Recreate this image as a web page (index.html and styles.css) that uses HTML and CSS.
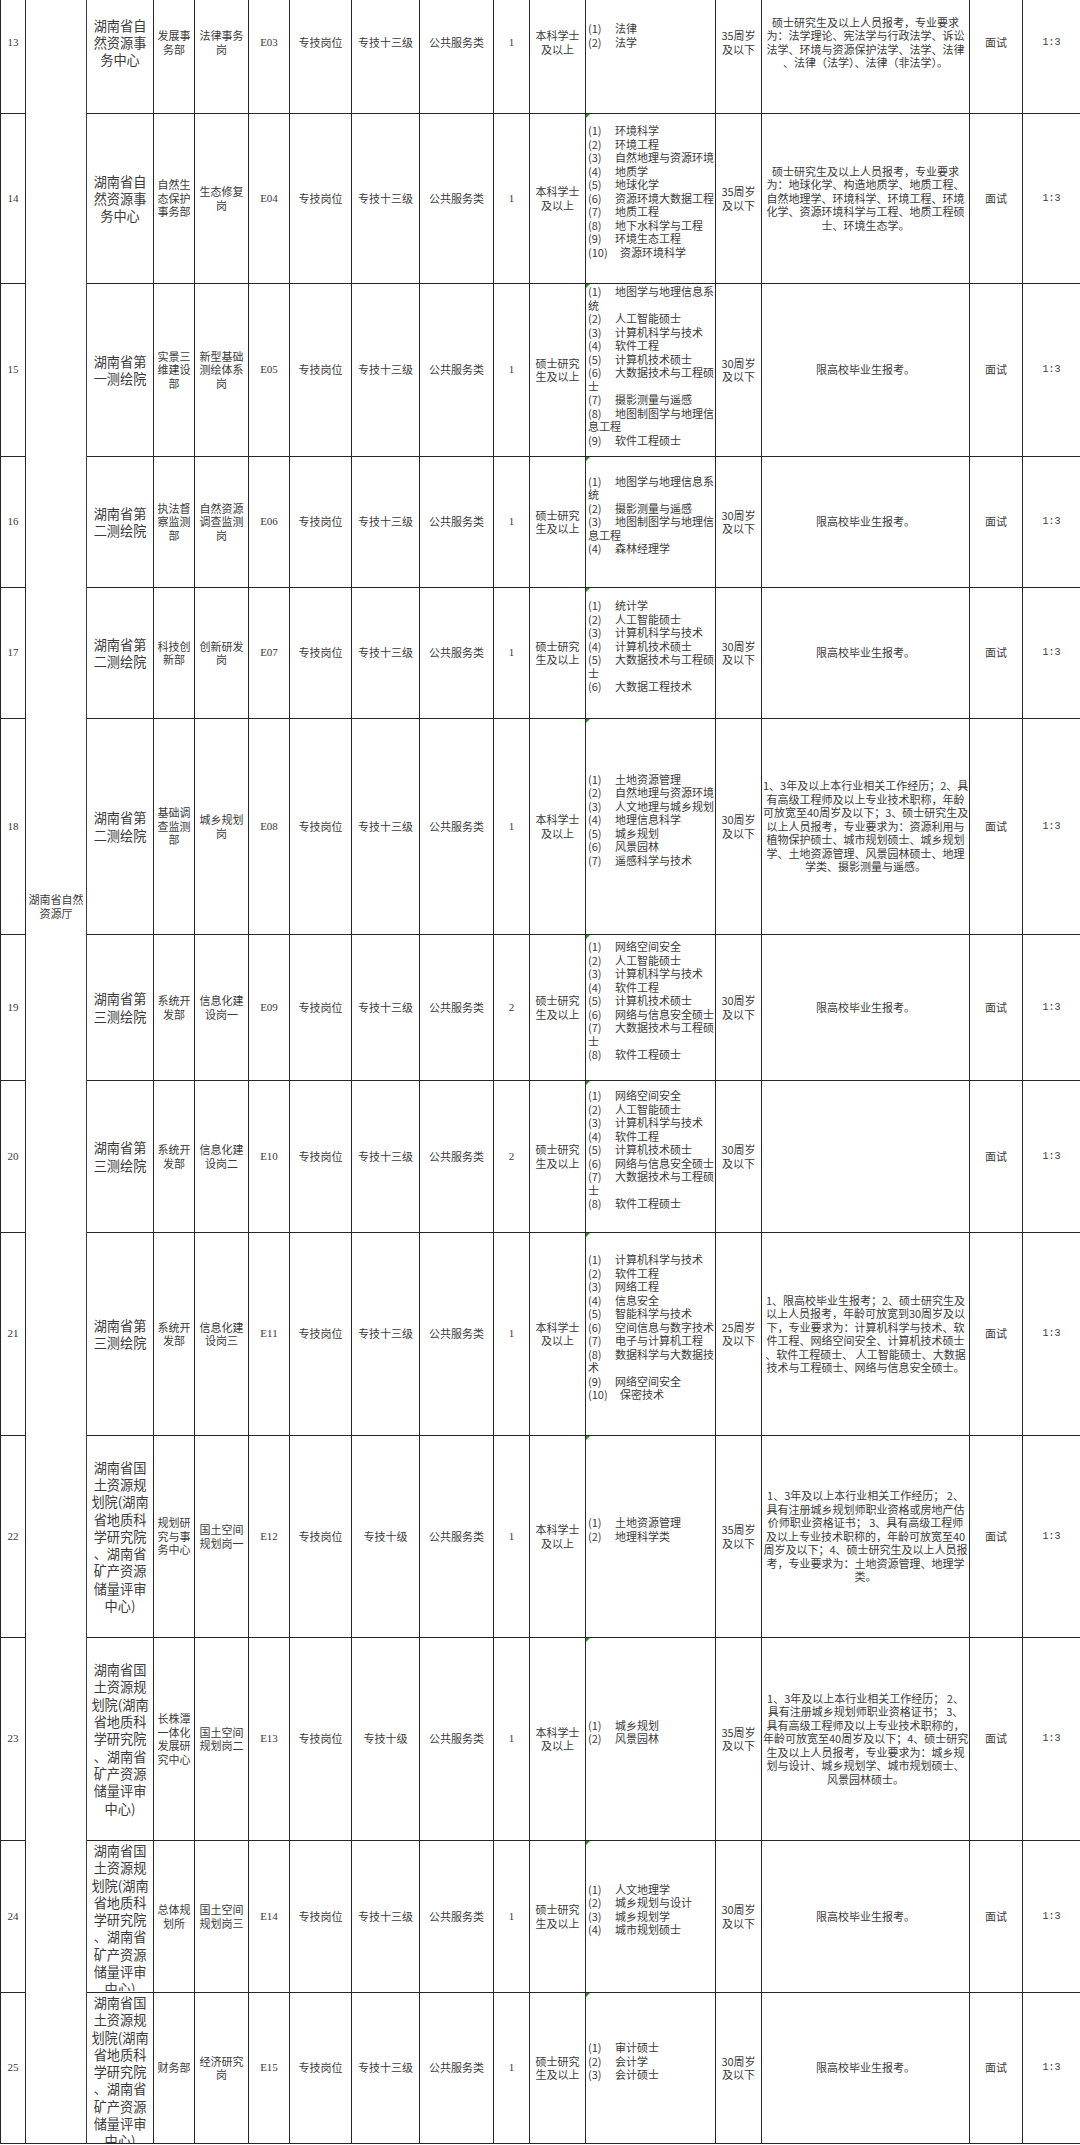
FILE: index.html
```html
<!DOCTYPE html>
<html lang="zh-CN">
<head>
<meta charset="utf-8">
<title>岗位表</title>
<link rel="stylesheet" href="styles.css">
</head>
<body>
<table class="sheet">
<colgroup>
<col class="w-no"><col class="w-org"><col class="w-unit"><col class="w-dept"><col class="w-pos"><col class="w-code"><col class="w-type"><col class="w-level"><col class="w-cat"><col class="w-cnt"><col class="w-edu"><col class="w-maj"><col class="w-age"><col class="w-other"><col class="w-exam"><col class="w-ratio">
</colgroup>
<tbody>
<tr class="r13">
<td class="no">13</td>
<td class="org" rowspan="13">湖南省自然<br>资源厅</td>
<td class="unit">湖南省自<br>然资源事<br>务中心</td>
<td>发展事<br>务部</td>
<td>法律事务<br>岗</td>
<td class="num">E03</td>
<td>专技岗位</td>
<td>专技十三级</td>
<td>公共服务类</td>
<td class="num">1</td>
<td>本科学士<br>及以上</td>
<td class="maj"><span class="n">(1)</span>法律<br><span class="n">(2)</span>法学</td>
<td>35周岁<br>及以下</td>
<td>硕士研究生及以上人员报考，专业要求<br>为：法学理论、宪法学与行政法学、诉讼<br>法学、环境与资源保护法学、法学、法律<br>、法律（法学）、法律（非法学）。</td>
<td>面试</td>
<td class="ratio">1:3</td>
</tr>
<tr class="r14">
<td class="no">14</td>
<td class="unit">湖南省自<br>然资源事<br>务中心</td>
<td>自然生<br>态保护<br>事务部</td>
<td>生态修复<br>岗</td>
<td class="num">E04</td>
<td>专技岗位</td>
<td>专技十三级</td>
<td>公共服务类</td>
<td class="num">1</td>
<td>本科学士<br>及以上</td>
<td class="maj"><span class="n">(1)</span>环境科学<br><span class="n">(2)</span>环境工程<br><span class="n">(3)</span>自然地理与资源环境<br><span class="n">(4)</span>地质学<br><span class="n">(5)</span>地球化学<br><span class="n">(6)</span>资源环境大数据工程<br><span class="n">(7)</span>地质工程<br><span class="n">(8)</span>地下水科学与工程<br><span class="n">(9)</span>环境生态工程<br><span class="n n2">(10)</span>资源环境科学</td>
<td>35周岁<br>及以下</td>
<td>硕士研究生及以上人员报考，专业要求<br>为：地球化学、构造地质学、地质工程、<br>自然地理学、环境科学、环境工程、环境<br>化学、资源环境科学与工程、地质工程硕<br>士、环境生态学。</td>
<td>面试</td>
<td class="ratio">1:3</td>
</tr>
<tr class="r15">
<td class="no">15</td>
<td class="unit">湖南省第<br>一测绘院</td>
<td>实景三<br>维建设<br>部</td>
<td>新型基础<br>测绘体系<br>岗</td>
<td class="num">E05</td>
<td>专技岗位</td>
<td>专技十三级</td>
<td>公共服务类</td>
<td class="num">1</td>
<td>硕士研究<br>生及以上</td>
<td class="maj top"><span class="n">(1)</span>地图学与地理信息系<br>统<br><span class="n">(2)</span>人工智能硕士<br><span class="n">(3)</span>计算机科学与技术<br><span class="n">(4)</span>软件工程<br><span class="n">(5)</span>计算机技术硕士<br><span class="n">(6)</span>大数据技术与工程硕<br>士<br><span class="n">(7)</span>摄影测量与遥感<br><span class="n">(8)</span>地图制图学与地理信<br>息工程<br><span class="n">(9)</span>软件工程硕士</td>
<td>30周岁<br>及以下</td>
<td>限高校毕业生报考。</td>
<td>面试</td>
<td class="ratio">1:3</td>
</tr>
<tr class="r16">
<td class="no">16</td>
<td class="unit">湖南省第<br>二测绘院</td>
<td>执法督<br>察监测<br>部</td>
<td>自然资源<br>调查监测<br>岗</td>
<td class="num">E06</td>
<td>专技岗位</td>
<td>专技十三级</td>
<td>公共服务类</td>
<td class="num">1</td>
<td>硕士研究<br>生及以上</td>
<td class="maj"><span class="n">(1)</span>地图学与地理信息系<br>统<br><span class="n">(2)</span>摄影测量与遥感<br><span class="n">(3)</span>地图制图学与地理信<br>息工程<br><span class="n">(4)</span>森林经理学</td>
<td>30周岁<br>及以下</td>
<td>限高校毕业生报考。</td>
<td>面试</td>
<td class="ratio">1:3</td>
</tr>
<tr class="r17">
<td class="no">17</td>
<td class="unit">湖南省第<br>二测绘院</td>
<td>科技创<br>新部</td>
<td>创新研发<br>岗</td>
<td class="num">E07</td>
<td>专技岗位</td>
<td>专技十三级</td>
<td>公共服务类</td>
<td class="num">1</td>
<td>硕士研究<br>生及以上</td>
<td class="maj"><span class="n">(1)</span>统计学<br><span class="n">(2)</span>人工智能硕士<br><span class="n">(3)</span>计算机科学与技术<br><span class="n">(4)</span>计算机技术硕士<br><span class="n">(5)</span>大数据技术与工程硕<br>士<br><span class="n">(6)</span>大数据工程技术</td>
<td>30周岁<br>及以下</td>
<td>限高校毕业生报考。</td>
<td>面试</td>
<td class="ratio">1:3</td>
</tr>
<tr class="r18">
<td class="no">18</td>
<td class="unit">湖南省第<br>二测绘院</td>
<td>基础调<br>查监测<br>部</td>
<td>城乡规划<br>岗</td>
<td class="num">E08</td>
<td>专技岗位</td>
<td>专技十三级</td>
<td>公共服务类</td>
<td class="num">1</td>
<td>本科学士<br>及以上</td>
<td class="maj"><span class="n">(1)</span>土地资源管理<br><span class="n">(2)</span>自然地理与资源环境<br><span class="n">(3)</span>人文地理与城乡规划<br><span class="n">(4)</span>地理信息科学<br><span class="n">(5)</span>城乡规划<br><span class="n">(6)</span>风景园林<br><span class="n">(7)</span>遥感科学与技术</td>
<td>30周岁<br>及以下</td>
<td>1、3年及以上本行业相关工作经历；2、具<br>有高级工程师及以上专业技术职称，年龄<br>可放宽至40周岁及以下；3、硕士研究生及<br>以上人员报考，专业要求为：资源利用与<br>植物保护硕士、城市规划硕士、城乡规划<br>学、土地资源管理、风景园林硕士、地理<br>学类、摄影测量与遥感。</td>
<td>面试</td>
<td class="ratio">1:3</td>
</tr>
<tr class="r19">
<td class="no">19</td>
<td class="unit">湖南省第<br>三测绘院</td>
<td>系统开<br>发部</td>
<td>信息化建<br>设岗一</td>
<td class="num">E09</td>
<td>专技岗位</td>
<td>专技十三级</td>
<td>公共服务类</td>
<td class="num">2</td>
<td>硕士研究<br>生及以上</td>
<td class="maj"><span class="n">(1)</span>网络空间安全<br><span class="n">(2)</span>人工智能硕士<br><span class="n">(3)</span>计算机科学与技术<br><span class="n">(4)</span>软件工程<br><span class="n">(5)</span>计算机技术硕士<br><span class="n">(6)</span>网络与信息安全硕士<br><span class="n">(7)</span>大数据技术与工程硕<br>士<br><span class="n">(8)</span>软件工程硕士</td>
<td>30周岁<br>及以下</td>
<td>限高校毕业生报考。</td>
<td>面试</td>
<td class="ratio">1:3</td>
</tr>
<tr class="r20">
<td class="no">20</td>
<td class="unit">湖南省第<br>三测绘院</td>
<td>系统开<br>发部</td>
<td>信息化建<br>设岗二</td>
<td class="num">E10</td>
<td>专技岗位</td>
<td>专技十三级</td>
<td>公共服务类</td>
<td class="num">2</td>
<td>硕士研究<br>生及以上</td>
<td class="maj"><span class="n">(1)</span>网络空间安全<br><span class="n">(2)</span>人工智能硕士<br><span class="n">(3)</span>计算机科学与技术<br><span class="n">(4)</span>软件工程<br><span class="n">(5)</span>计算机技术硕士<br><span class="n">(6)</span>网络与信息安全硕士<br><span class="n">(7)</span>大数据技术与工程硕<br>士<br><span class="n">(8)</span>软件工程硕士</td>
<td>30周岁<br>及以下</td>
<td></td>
<td>面试</td>
<td class="ratio">1:3</td>
</tr>
<tr class="r21">
<td class="no">21</td>
<td class="unit">湖南省第<br>三测绘院</td>
<td>系统开<br>发部</td>
<td>信息化建<br>设岗三</td>
<td class="num">E11</td>
<td>专技岗位</td>
<td>专技十三级</td>
<td>公共服务类</td>
<td class="num">1</td>
<td>本科学士<br>及以上</td>
<td class="maj"><span class="n">(1)</span>计算机科学与技术<br><span class="n">(2)</span>软件工程<br><span class="n">(3)</span>网络工程<br><span class="n">(4)</span>信息安全<br><span class="n">(5)</span>智能科学与技术<br><span class="n">(6)</span>空间信息与数字技术<br><span class="n">(7)</span>电子与计算机工程<br><span class="n">(8)</span>数据科学与大数据技<br>术<br><span class="n">(9)</span>网络空间安全<br><span class="n n2">(10)</span>保密技术</td>
<td>25周岁<br>及以下</td>
<td>1、限高校毕业生报考；2、硕士研究生及<br>以上人员报考，年龄可放宽到30周岁及以<br>下，专业要求为：计算机科学与技术、软<br>件工程、网络空间安全、计算机技术硕士<br>、软件工程硕士、 人工智能硕士、大数据<br>技术与工程硕士、网络与信息安全硕士。</td>
<td>面试</td>
<td class="ratio">1:3</td>
</tr>
<tr class="r22">
<td class="no">22</td>
<td class="unit">湖南省国<br>土资源规<br>划院(湖南<br>省地质科<br>学研究院<br>、湖南省<br>矿产资源<br>储量评审<br>中心)</td>
<td>规划研<br>究与事<br>务中心</td>
<td>国土空间<br>规划岗一</td>
<td class="num">E12</td>
<td>专技岗位</td>
<td>专技十级</td>
<td>公共服务类</td>
<td class="num">1</td>
<td>本科学士<br>及以上</td>
<td class="maj"><span class="n">(1)</span>土地资源管理<br><span class="n">(2)</span>地理科学类</td>
<td>35周岁<br>及以下</td>
<td>1、3年及以上本行业相关工作经历； 2、<br>具有注册城乡规划师职业资格或房地产估<br>价师职业资格证书； 3、具有高级工程师<br>及以上专业技术职称的，年龄可放宽至40<br>周岁及以下；4、硕士研究生及以上人员报<br>考，专业要求为：土地资源管理、地理学<br>类。</td>
<td>面试</td>
<td class="ratio">1:3</td>
</tr>
<tr class="r23">
<td class="no">23</td>
<td class="unit">湖南省国<br>土资源规<br>划院(湖南<br>省地质科<br>学研究院<br>、湖南省<br>矿产资源<br>储量评审<br>中心)</td>
<td>长株潭<br>一体化<br>发展研<br>究中心</td>
<td>国土空间<br>规划岗二</td>
<td class="num">E13</td>
<td>专技岗位</td>
<td>专技十级</td>
<td>公共服务类</td>
<td class="num">1</td>
<td>本科学士<br>及以上</td>
<td class="maj"><span class="n">(1)</span>城乡规划<br><span class="n">(2)</span>风景园林</td>
<td>35周岁<br>及以下</td>
<td>1、3年及以上本行业相关工作经历； 2、<br>具有注册城乡规划师职业资格证书； 3、<br>具有高级工程师及以上专业技术职称的，<br>年龄可放宽至40周岁及以下；4、硕士研究<br>生及以上人员报考，专业要求为：城乡规<br>划与设计、城乡规划学、城市规划硕士、<br>风景园林硕士。</td>
<td>面试</td>
<td class="ratio">1:3</td>
</tr>
<tr class="r24">
<td class="no">24</td>
<td class="unit clipcell"><div class="clip">湖南省国<br>土资源规<br>划院(湖南<br>省地质科<br>学研究院<br>、湖南省<br>矿产资源<br>储量评审<br>中心)</div></td>
<td>总体规<br>划所</td>
<td>国土空间<br>规划岗三</td>
<td class="num">E14</td>
<td>专技岗位</td>
<td>专技十三级</td>
<td>公共服务类</td>
<td class="num">1</td>
<td>硕士研究<br>生及以上</td>
<td class="maj"><span class="n">(1)</span>人文地理学<br><span class="n">(2)</span>城乡规划与设计<br><span class="n">(3)</span>城乡规划学<br><span class="n">(4)</span>城市规划硕士</td>
<td>30周岁<br>及以下</td>
<td>限高校毕业生报考。</td>
<td>面试</td>
<td class="ratio">1:3</td>
</tr>
<tr class="r25">
<td class="no">25</td>
<td class="unit clipcell"><div class="clip">湖南省国<br>土资源规<br>划院(湖南<br>省地质科<br>学研究院<br>、湖南省<br>矿产资源<br>储量评审<br>中心)</div></td>
<td>财务部</td>
<td>经济研究<br>岗</td>
<td class="num">E15</td>
<td>专技岗位</td>
<td>专技十三级</td>
<td>公共服务类</td>
<td class="num">1</td>
<td>硕士研究<br>生及以上</td>
<td class="maj"><span class="n">(1)</span>审计硕士<br><span class="n">(2)</span>会计学<br><span class="n">(3)</span>会计硕士</td>
<td>30周岁<br>及以下</td>
<td>限高校毕业生报考。</td>
<td>面试</td>
<td class="ratio">1:3</td>
</tr>
</tbody>
</table>
</body>
</html>
```

FILE: styles.css
```css
* { box-sizing: border-box; }

html, body {
  margin: 0;
  padding: 0;
  background: #ffffff;
}

body {
  width: 1080px;
  height: 2145px;
  overflow: hidden;
}

.sheet {
  border-collapse: separate;
  border-spacing: 0;
  table-layout: fixed;
  width: 1080px;
  margin-top: -28px;
  font-family: "Noto Sans CJK SC", "Noto Sans", sans-serif;
  font-size: 11px;
  line-height: 13.5px;
  color: #3a3a3a;
}

.w-no { width: 26px; }
.w-org { width: 61px; }
.w-unit { width: 67px; }
.w-dept { width: 41px; }
.w-pos { width: 54px; }
.w-code { width: 41px; }
.w-type { width: 62px; }
.w-level { width: 68px; }
.w-cat { width: 74px; }
.w-cnt { width: 36px; }
.w-edu { width: 56px; }
.w-maj { width: 130px; }
.w-age { width: 46px; }
.w-other { width: 208px; }
.w-exam { width: 53px; }
.w-ratio { width: 57px; }

.sheet td {
  border-right: 1px solid #262626;
  border-bottom: 1px solid #262626;
  padding: 0 1px;
  text-align: center;
  vertical-align: middle;
  white-space: nowrap;
  overflow: hidden;
}

.sheet td.no {
  border-left: 1px solid #262626;
  font-family: "Liberation Serif", serif;
  font-size: 11px;
}

.sheet td.org {
  vertical-align: top;
  padding-top: 921px;
  border-right-color: #3c3c3c;
}

.sheet td.unit {
  padding: 0;
  font-size: 13.2px;
  line-height: 17.3px;
}

.sheet td.clipcell {
  vertical-align: top;
  padding-top: 1px;
}

.clip {
  height: 149px;
  overflow: hidden;
}

.sheet td.num {
  font-family: "Liberation Serif", serif;
  font-size: 11px;
}

.sheet td.ratio {
  border-right: none;
  font-family: "Liberation Mono", monospace;
  font-size: 10px;
}

.sheet td.maj {
  position: relative;
  text-align: left;
  padding: 0 2px 13.5px 2px;
}

.sheet td.maj::before {
  content: "";
  position: absolute;
  left: 0;
  top: 0;
  border-top: 4px solid #2f8f2a;
  border-right: 4px solid transparent;
}

.sheet td.maj.top {
  vertical-align: top;
  padding-top: 1px;
  padding-bottom: 0;
}

.n {
  display: inline-block;
  width: 27px;
}

.n.n2 {
  width: 32px;
}

.r13 { height: 142px; }
.r14 { height: 170px; }
.r15 { height: 173px; }
.r16 { height: 131px; }
.r17 { height: 131px; }
.r18 { height: 216px; }
.r19 { height: 146px; }
.r20 { height: 152px; }
.r21 { height: 203px; }
.r22 { height: 202px; }
.r23 { height: 203px; }
.r24 { height: 152px; }
.r25 { height: 151px; }
```
